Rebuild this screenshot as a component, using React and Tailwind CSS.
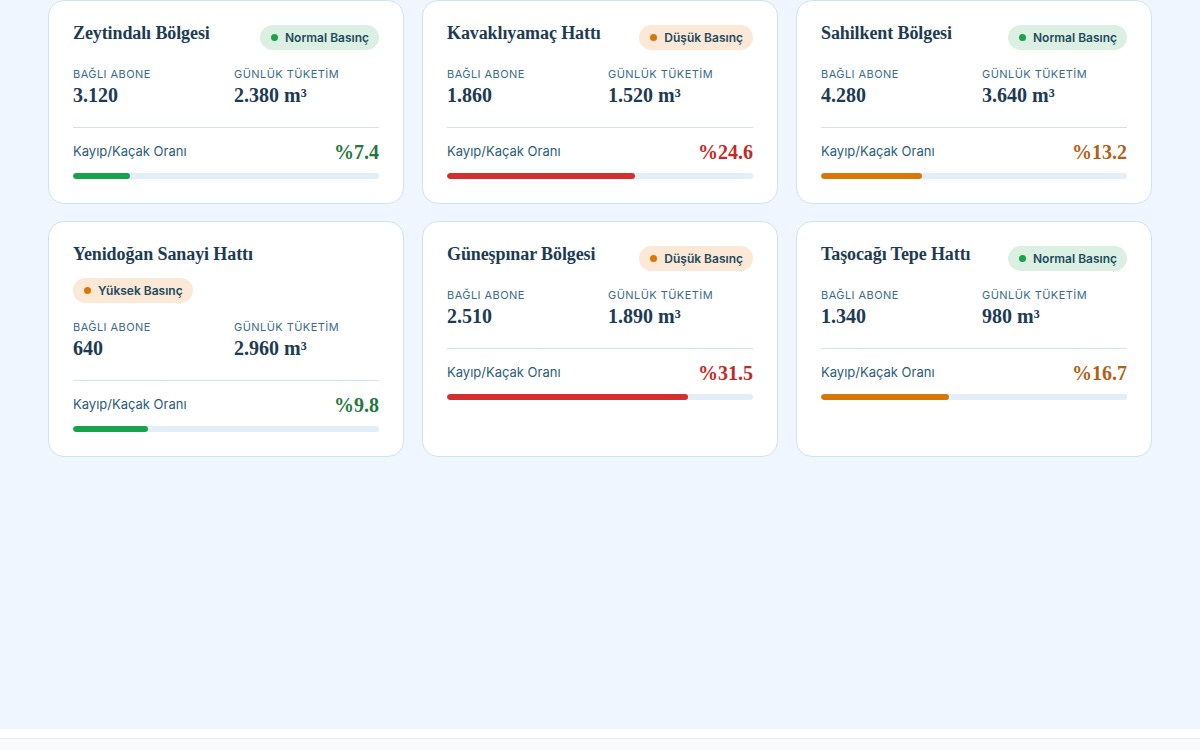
import React from "react";

const regions = [
  { name: "Zeytindalı Bölgesi", status: "normal", abone: "3.120", tuketim: "2.380", loss: 7.4 },
  { name: "Kavaklıyamaç Hattı", status: "low", abone: "1.860", tuketim: "1.520", loss: 24.6 },
  { name: "Sahilkent Bölgesi", status: "normal", abone: "4.280", tuketim: "3.640", loss: 13.2 },
  { name: "Yenidoğan Sanayi Hattı", status: "high", abone: "640", tuketim: "2.960", loss: 9.8 },
  { name: "Güneşpınar Bölgesi", status: "low", abone: "2.510", tuketim: "1.890", loss: 31.5 },
  { name: "Taşocağı Tepe Hattı", status: "normal", abone: "1.340", tuketim: "980", loss: 16.7 },
];

const serif = { fontFamily: '"Liberation Serif", "DejaVu Serif", serif' };
const sans = { fontFamily: "Inter, sans-serif" };

function Badge({ status }) {
  if (status === "normal") {
    return (
      <span className="inline-flex items-center gap-[7px] rounded-full bg-[#dbf0e3] pl-[11px] pr-[10px] h-[25px] text-[12px] font-semibold text-[#1e4a5c] whitespace-nowrap">
        <span className="w-[7px] h-[7px] rounded-full bg-[#16a34a]" />
        Normal Basınç
      </span>
    );
  }
  const label = status === "low" ? "Düşük Basınç" : "Yüksek Basınç";
  return (
    <span className="inline-flex items-center gap-[7px] rounded-full bg-[#fbe8d6] pl-[11px] pr-[10px] h-[25px] text-[12px] font-semibold text-[#1e4a5c] whitespace-nowrap">
      <span className="w-[7px] h-[7px] rounded-full bg-[#d97706]" />
      {label}
    </span>
  );
}

function lossColors(loss) {
  if (loss < 10) return { text: "text-[#1f7a3d]", bar: "bg-[#16a34a]" };
  if (loss < 20) return { text: "text-[#b45f14]", bar: "bg-[#d97706]" };
  return { text: "text-[#c62828]", bar: "bg-[#d32f2f]" };
}

function Stat({ label, value }) {
  return (
    <div>
      <div className="text-[11px] leading-[16px] tracking-[0.04em] uppercase text-[#3a6c8c]" style={sans}>
        {label}
      </div>
      <div style={serif} className="text-[20px] leading-[24px] font-bold text-[#1d3b53] mt-[1px]">
        {value}
      </div>
    </div>
  );
}

function Card({ r }) {
  const c = lossColors(r.loss);
  return (
    <div className="bg-white rounded-[16px] border border-[#cfe3f1] px-6 pt-6 pb-6 flex flex-col">
      <div className="flex flex-wrap items-start justify-between gap-x-3 gap-y-2">
        <h3
          style={serif}
          className="text-[18px] leading-[22px] font-bold text-[#1d3b53] tracking-[-0.1px] -mt-[3px] mb-[5px]"
        >
          {r.name}
        </h3>
        <Badge status={r.status} />
      </div>
      <div className="grid grid-cols-2 gap-4 mt-[16px]">
        <Stat label="BAĞLI ABONE" value={r.abone} />
        <Stat label="GÜNLÜK TÜKETİM" value={`${r.tuketim} m³`} />
      </div>
      <div className="border-t border-[#d3e3ee] mt-[20px] pt-[11px]">
        <div className="flex items-center justify-between">
          <span className="text-[13px] text-[#2b5d7e]" style={sans}>
            Kayıp/Kaçak Oranı
          </span>
          <span style={serif} className={`text-[20px] leading-[26px] font-bold ${c.text}`}>
            %{r.loss}
          </span>
        </div>
        <div className="mt-[8px] h-[6px] rounded-full bg-[#e2eff9] overflow-hidden">
          <div className={`h-full rounded-full ${c.bar}`} style={{ width: `${r.loss * 2.5}%` }} />
        </div>
      </div>
    </div>
  );
}

export default function App() {
  return (
    <div className="min-h-screen bg-[#f8fafc]" style={sans}>
      <main className="bg-[#eff6ff] h-[729px]">
        <div className="px-[48px]">
          <div className="grid grid-cols-3 gap-x-[18px] gap-y-[17px]">
            {regions.map((r) => (
              <Card key={r.name} r={r} />
            ))}
          </div>
        </div>
      </main>
      <div className="h-[10px] bg-white border-b border-[#e5e9ee]" />
      <div className="h-[11px] bg-[#f8fafc]" />
    </div>
  );
}
